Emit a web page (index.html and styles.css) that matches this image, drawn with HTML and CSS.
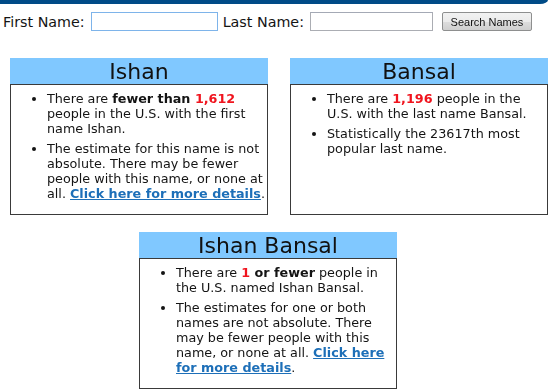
FILE: index.html
```html
<!DOCTYPE html>
<html lang="en">
<head>
    <meta charset="UTF-8">
    <title>Name Search</title>
    <link rel="stylesheet" href="styles.css">
</head>
<body>
    <div class="topbar"></div>
    <form class="search">
        <label for="first">First Name:</label>
        <input type="text" id="first" class="name-input first-input" autofocus>
        <label for="last">Last Name:</label>
        <input type="text" id="last" class="name-input last-input">
        <button type="button" class="search-btn">Search Names</button>
    </form>

    <div class="results">
        <div class="card">
            <h2 class="card-title">Ishan</h2>
            <div class="card-body">
                <ul>
                    <li>There are <b>fewer than <span class="count">1,612</span></b> people in the U.S. with the first name Ishan.</li>
                    <li>The estimate for this name is not absolute. There may be fewer people with this name, or none at all. <a href="#">Click here for more details</a>.</li>
                </ul>
            </div>
        </div>
        <div class="card">
            <h2 class="card-title">Bansal</h2>
            <div class="card-body">
                <ul>
                    <li>There are <span class="count">1,196</span> people in the U.S. with the last name Bansal.</li>
                    <li>Statistically the 23617th most popular last name.</li>
                </ul>
            </div>
        </div>
        <div class="card card-full">
            <h2 class="card-title">Ishan Bansal</h2>
            <div class="card-body">
                <ul>
                    <li>There are <b><span class="count">1</span> or fewer</b> people in the U.S. named Ishan Bansal.</li>
                    <li>The estimates for one or both names are not absolute. There may be fewer people with this name, or none at all. <a href="#">Click here for more details</a>.</li>
                </ul>
            </div>
        </div>
    </div>
</body>
</html>
```

FILE: styles.css
```css
body {
    margin: 0;
    font-family: 'DejaVu Sans', Verdana, sans-serif;
    color: #141414;
    background: #fff;
}
.topbar {
    height: 4px;
    background: #004b87;
    border-bottom-right-radius: 8px 4px;
    margin-right: 2px;
}
.search {
    display: flex;
    align-items: center;
    padding: 8px 0 0 3px;
    font-size: 14.3px;
}
.search label {
    margin-right: 6px;
}
.name-input {
    height: 19px;
    box-sizing: border-box;
    border: 1px solid #abadb3;
    border-top-color: #a4a9b5;
    padding: 0 2px;
    margin: 0 5px 0 0;
    font-size: 13px;
}
.first-input {
    width: 127px;
    border-color: #7eb4ea;
    outline: none;
}
.last-input {
    width: 123px;
    margin-right: 9px;
}
.search-btn {
    width: 90px;
    height: 19px;
    padding: 0;
    font-family: 'Liberation Sans', Arial, sans-serif;
    font-size: 11px;
    color: #111;
    border: 1px solid #8e8f8f;
    border-radius: 2px;
    background: linear-gradient(#f2f2f2, #ebebeb 50%, #dddddd 51%, #cfcfcf);
}
.results {
    display: grid;
    grid-template-columns: 258px 258px;
    column-gap: 22px;
    row-gap: 17px;
    padding: 27px 0 0 10px;
}
.card {
    width: 258px;
}
.card-full {
    grid-column: 1 / 3;
    margin-left: 129px;
}
.card-title {
    margin: 0;
    height: 26px;
    line-height: 27px;
    background: #80c8ff;
    text-align: center;
    font-size: 22px;
    font-weight: normal;
    color: #111;
}
.card-body {
    height: 131px;
    box-sizing: border-box;
    border: 1px solid #3a3a3a;
}
.card-body ul {
    margin: 6px 0 0;
    padding: 0 0 0 36px;
    font-size: 12.75px;
    line-height: 15px;
}
.card-body li {
    margin-bottom: 5px;
}
.count {
    color: #f0141e;
    font-weight: bold;
}
.card-body a {
    color: #1d6fb8;
    font-weight: bold;
}
```
